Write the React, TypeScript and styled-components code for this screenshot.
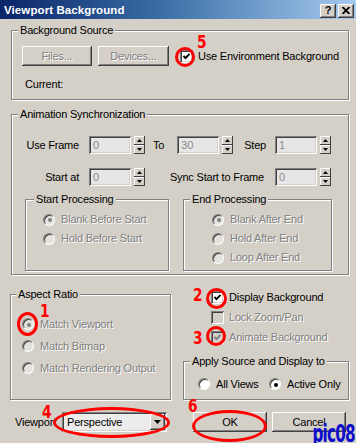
import React from "react";
import styled, { createGlobalStyle } from "styled-components";

const FONT = `"Liberation Sans", Arial, sans-serif`;
const FACE = "#D4D0C8";

const GlobalStyle = createGlobalStyle`
  html, body {
    margin: 0;
    padding: 0;
    background: ${FACE};
  }
  body {
    font-family: ${FONT};
    font-size: 11px;
    letter-spacing: -0.2px;
    color: #000;
  }
`;

const Window = styled.div`
  position: relative;
  width: 356px;
  height: 443px;
  overflow: hidden;
  background: ${FACE};
  display: flex;
  flex-direction: column;
`;

const TitleBar = styled.div`
  height: 19px;
  display: flex;
  align-items: center;
  justify-content: space-between;
  padding: 0 2px 0 4px;
  background: linear-gradient(to right, #0a246a 0%, #3a6ea5 45%, #a6caf0 100%);
`;

const TitleText = styled.span`
  color: #fff;
  font-weight: 700;
  font-size: 11.5px;
  letter-spacing: 0.1px;
`;

const TitleButtons = styled.div`
  display: flex;
  gap: 2px;
  margin-top: 2px;
`;

const TitleButton = styled.div`
  width: 16px;
  height: 14px;
  box-sizing: border-box;
  background: ${FACE};
  box-shadow: inset -1px -1px #404040, inset 1px 1px #fff, inset -2px -2px #808080;
  display: flex;
  align-items: center;
  justify-content: center;
  font-weight: 700;
  font-size: 11px;
  line-height: 1;
`;

const Body = styled.div`
  display: flex;
  flex-direction: column;
  padding: 5px 7px 0 11px;
`;

const Group = styled.fieldset<{ $mt?: number; $pl?: number; $pb?: number; $w?: number }>`
  margin: ${(p) => p.$mt ?? 0}px 0 0;
  padding: 0 0 ${(p) => p.$pb ?? 0}px ${(p) => p.$pl ?? 0}px;
  min-width: 0;
  ${(p) => (p.$w ? `width: ${p.$w}px;` : "")}
  box-sizing: border-box;
  border: 1px solid #808080;
  box-shadow: inset 1px 1px #fff, 1px 1px #fff;
`;

const Legend = styled.legend<{ $ml?: number }>`
  margin-left: ${(p) => p.$ml ?? 6}px;
  padding: 0 2px;
  background: ${FACE};
  line-height: 13px;
  white-space: nowrap;
`;

const Row = styled.div<{ $mt?: number; $pl?: number; $pr?: number }>`
  display: flex;
  align-items: center;
  margin-top: ${(p) => p.$mt ?? 0}px;
  padding-left: ${(p) => p.$pl ?? 0}px;
  padding-right: ${(p) => p.$pr ?? 0}px;
`;

const Text = styled.span<{ $disabled?: boolean; $ml?: number }>`
  line-height: 13px;
  white-space: nowrap;
  margin-left: ${(p) => p.$ml ?? 0}px;
  color: ${(p) => (p.$disabled ? "#808080" : "#000")};
  text-shadow: ${(p) => (p.$disabled ? "1px 1px #fff" : "none")};
`;

const FieldLabel = styled.span<{ $w?: number; $mr?: number; $ml?: string; $left?: boolean }>`
  ${(p) => (p.$w ? `width: ${p.$w}px;` : "")}
  text-align: ${(p) => (p.$left ? "left" : "right")};
  white-space: nowrap;
  line-height: 13px;
  margin-right: ${(p) => p.$mr ?? 0}px;
  margin-left: ${(p) => p.$ml ?? "0"};
`;

const PushButton = styled.div<{ $w: number; $ml?: number; $disabled?: boolean }>`
  width: ${(p) => p.$w}px;
  height: 20px;
  margin-left: ${(p) => p.$ml ?? 0}px;
  box-sizing: border-box;
  flex-shrink: 0;
  display: flex;
  align-items: center;
  justify-content: center;
  background: ${FACE};
  box-shadow: inset -1px -1px #404040, inset 1px 1px #fff, inset -2px -2px #808080;
  color: ${(p) => (p.$disabled ? "#808080" : "#000")};
  text-shadow: ${(p) => (p.$disabled ? "1px 1px #fff" : "none")};
  line-height: 13px;
`;

const Sunken = styled.div<{ $w: number; $h: number; $bg?: string; $ml?: number }>`
  width: ${(p) => p.$w}px;
  height: ${(p) => p.$h}px;
  margin-left: ${(p) => p.$ml ?? 0}px;
  box-sizing: border-box;
  background: ${(p) => p.$bg ?? "#e6e6e6"};
  box-shadow: inset 1px 1px #808080, inset -1px -1px #fff, inset 2px 2px #404040, inset -2px -2px ${FACE};
  flex-shrink: 0;
`;

const NumInput = styled(Sunken)`
  display: flex;
  align-items: center;
  padding-left: 4px;
  color: #8a8a8a;
  line-height: 13px;
`;

const SpinBox = styled.div`
  width: 11px;
  height: 18px;
  margin-left: 3px;
  display: flex;
  flex-direction: column;
  flex-shrink: 0;
`;

const SpinHalf = styled.div`
  flex: 1;
  display: flex;
  align-items: center;
  justify-content: center;
  background: ${FACE};
  box-shadow: inset -1px -1px #404040, inset 1px 1px #fff;
`;

const Field = styled.div`
  display: flex;
  align-items: center;
  flex-shrink: 0;
`;

const Tri = ({ down }: { down?: boolean }) => (
  <svg width="5" height="3" viewBox="0 0 5 3">
    <polygon points={down ? "0,0 5,0 2.5,3" : "0,3 5,3 2.5,0"} fill="#000" />
  </svg>
);

const Spinner = ({ value }: { value: string }) => (
  <Field>
    <NumInput $w={42} $h={18}>{value}</NumInput>
    <SpinBox>
      <SpinHalf>
        <Tri />
      </SpinHalf>
      <SpinHalf>
        <Tri down />
      </SpinHalf>
    </SpinBox>
  </Field>
);

const Mid = styled.div`
  flex: 1;
  display: flex;
  align-items: center;
`;

const SubRow = styled.div`
  display: flex;
  align-items: stretch;
  margin-top: 7px;
  padding-left: 13px;
  gap: 14px;
`;

const OptionList = styled.div<{ $mt: number; $pl: number }>`
  display: flex;
  flex-direction: column;
  margin-top: ${(p) => p.$mt}px;
  padding-left: ${(p) => p.$pl}px;
`;

const Option = styled.div<{ $h: number; $w?: number }>`
  height: ${(p) => p.$h}px;
  ${(p) => (p.$w ? `width: ${p.$w}px;` : "")}
  display: flex;
  align-items: center;
  flex-shrink: 0;
`;

const RadioDot = styled.div<{ $enabled?: boolean }>`
  width: 12px;
  height: 12px;
  box-sizing: border-box;
  border-radius: 50%;
  flex-shrink: 0;
  background: ${(p) => (p.$enabled ? "#fff" : "#e4e2dd")};
  border: 1px solid #808080;
  border-right-color: #fff;
  border-bottom-color: #fff;
  box-shadow: inset 1px 1px #404040;
  display: flex;
  align-items: center;
  justify-content: center;
`;

const Pip = styled.div<{ $enabled?: boolean }>`
  width: 4px;
  height: 4px;
  border-radius: 50%;
  margin: 1px 0 0 1px;
  background: ${(p) => (p.$enabled ? "#000" : "#808080")};
`;

const Radio = ({
  label,
  checked,
  enabled,
}: {
  label: string;
  checked?: boolean;
  enabled?: boolean;
}) => (
  <>
    <RadioDot $enabled={enabled}>{checked && <Pip $enabled={enabled} />}</RadioDot>
    <Text $ml={6} $disabled={!enabled}>
      {label}
    </Text>
  </>
);

const CheckBoxBox = styled(Sunken)`
  display: flex;
  align-items: center;
  justify-content: center;
`;

const Check = ({
  enabled,
  checked,
  ml,
}: {
  enabled?: boolean;
  checked?: boolean;
  ml?: number;
}) => (
  <CheckBoxBox $w={13} $h={13} $ml={ml} $bg={enabled ? "#fff" : FACE}>
    {checked && (
      <svg width="9" height="9" viewBox="0 0 9 9">
        <polyline
          points="1.5,4 3.5,6.2 7.5,1.8"
          fill="none"
          stroke={enabled ? "#000" : "#808080"}
          strokeWidth="1.9"
        />
      </svg>
    )}
  </CheckBoxBox>
);

const Lower = styled.div`
  display: flex;
  gap: 12px;
`;

const RightCol = styled.div`
  flex: 1;
  display: flex;
  flex-direction: column;
`;

const BottomRow = styled.div`
  display: flex;
  align-items: center;
  margin-top: 12px;
  padding-left: 4px;
`;

const Combo = styled(Sunken)`
  display: flex;
  align-items: center;
  justify-content: space-between;
  padding: 2px 2px 2px 5px;
  line-height: 13px;
`;

const ComboArrow = styled.div`
  width: 15px;
  height: 16px;
  box-sizing: border-box;
  display: flex;
  align-items: center;
  justify-content: center;
  background: ${FACE};
  box-shadow: inset -1px -1px #404040, inset 1px 1px #fff, inset -2px -2px #808080;
`;

const Overlay = styled.div`
  position: absolute;
  inset: 0;
  pointer-events: none;
`;

const Ring = styled.div<{ $x: number; $y: number; $w: number; $h: number }>`
  position: absolute;
  left: ${(p) => p.$x}px;
  top: ${(p) => p.$y}px;
  width: ${(p) => p.$w}px;
  height: ${(p) => p.$h}px;
  box-sizing: border-box;
  border: 3px solid #f00;
  border-radius: 50%;
`;

const Num = styled.span<{ $x: number; $y: number }>`
  position: absolute;
  left: ${(p) => p.$x}px;
  top: ${(p) => p.$y}px;
  font-family: "DejaVu Sans Condensed", "DejaVu Sans", sans-serif;
  font-weight: 700;
  font-size: 18px;
  letter-spacing: 0;
  line-height: 1;
  color: #f00;
  transform: scaleX(0.85);
  transform-origin: left top;
`;

const Stamp = styled.span`
  position: absolute;
  right: 1px;
  bottom: -3px;
  font-family: "DejaVu Sans Condensed", "DejaVu Sans", sans-serif;
  font-weight: 700;
  font-size: 20px;
  line-height: 1;
  letter-spacing: -1px;
  color: #0d0dcc;
  transform: scale(0.85, 1.2);
  transform-origin: right bottom;
`;

export default function App() {
  return (
    <Window>
      <GlobalStyle />
      <TitleBar>
        <TitleText>Viewport Background</TitleText>
        <TitleButtons>
          <TitleButton>?</TitleButton>
          <TitleButton>
            <svg width="8" height="7" viewBox="0 0 8 7">
              <path d="M0.5 0 L7.5 7 M7.5 0 L0.5 7" stroke="#000" strokeWidth="1.8" />
            </svg>
          </TitleButton>
        </TitleButtons>
      </TitleBar>

      <Body>
        <Group $pb={8}>
          <Legend>Background Source</Legend>
          <Row $mt={9} $pl={10}>
            <PushButton $w={70} $disabled>
              Files...
            </PushButton>
            <PushButton $w={71} $ml={6} $disabled>
              Devices...
            </PushButton>
            <Check enabled checked ml={11} />
            <Text $ml={5}>Use Environment Background</Text>
          </Row>
          <Row $mt={12} $pl={13}>
            <Text>Current:</Text>
          </Row>
        </Group>

        <Group $mt={8} $pb={3}>
          <Legend>Animation Synchronization</Legend>
          <Row $mt={15} $pr={17}>
            <FieldLabel $w={67} $mr={10}>
              Use Frame
            </FieldLabel>
            <Spinner value="0" />
            <Mid>
              <FieldLabel $ml="8px" $mr={13}>
                To
              </FieldLabel>
              <Spinner value="30" />
              <FieldLabel $ml="auto" $mr={9}>
                Step
              </FieldLabel>
            </Mid>
            <Spinner value="1" />
          </Row>
          <Row $mt={14} $pr={17}>
            <FieldLabel $w={67} $mr={10}>
              Start at
            </FieldLabel>
            <Spinner value="0" />
            <Mid>
              <FieldLabel $ml="auto" $mr={11}>
                Sync Start to Frame
              </FieldLabel>
            </Mid>
            <Spinner value="0" />
          </Row>
          <SubRow>
            <Group $w={144}>
              <Legend $ml={8}>Start Processing</Legend>
              <OptionList $mt={4} $pl={17}>
                <Option $h={19}>
                  <Radio label="Blank Before Start" checked />
                </Option>
                <Option $h={19}>
                  <Radio label="Hold Before Start" />
                </Option>
              </OptionList>
            </Group>
            <Group $w={149} $pb={3}>
              <Legend $ml={6}>End Processing</Legend>
              <OptionList $mt={4} $pl={28}>
                <Option $h={19}>
                  <Radio label="Blank After End" checked />
                </Option>
                <Option $h={19}>
                  <Radio label="Hold After End" />
                </Option>
                <Option $h={19}>
                  <Radio label="Loop After End" />
                </Option>
              </OptionList>
            </Group>
          </SubRow>
        </Group>

        <Lower>
          <Group $mt={13} $w={161} $pb={18} style={{ marginLeft: -1 }}>
            <Legend $ml={5}>Aspect Ratio</Legend>
            <OptionList $mt={12} $pl={11}>
              <Option $h={22}>
                <Radio label="Match Viewport" checked />
              </Option>
              <Option $h={22}>
                <Radio label="Match Bitmap" />
              </Option>
              <Option $h={22}>
                <Radio label="Match Rendering Output" />
              </Option>
            </OptionList>
          </Group>
          <RightCol>
            <OptionList $mt={12} $pl={28}>
              <Option $h={20}>
                <Check enabled checked />
                <Text $ml={5}>Display Background</Text>
              </Option>
              <Option $h={20}>
                <Check />
                <Text $ml={5} $disabled>
                  Lock Zoom/Pan
                </Text>
              </Option>
              <Option $h={20}>
                <Check checked />
                <Text $ml={5} $disabled>
                  Animate Background
                </Text>
              </Option>
            </OptionList>
            <Group $mt={8} $pb={8}>
              <Legend $ml={6}>Apply Source and Display to</Legend>
              <Row $mt={9} $pl={14}>
                <Option $h={14} $w={71}>
                  <Radio label="All Views" enabled />
                </Option>
                <Option $h={14}>
                  <Radio label="Active Only" enabled checked />
                </Option>
              </Row>
            </Group>
          </RightCol>
        </Lower>

        <BottomRow>
          <FieldLabel $w={47} $left>
            Viewport
          </FieldLabel>
          <Combo $w={105} $h={20} $bg="#ececec">
            <span>Perspective</span>
            <ComboArrow>
              <svg width="7" height="4" viewBox="0 0 7 4">
                <polygon points="0,0 7,0 3.5,4" fill="#000" />
              </svg>
            </ComboArrow>
          </Combo>
          <PushButton $w={74} $ml={26}>
            OK
          </PushButton>
          <PushButton $w={74} $ml={5}>
            Cancel
          </PushButton>
        </BottomRow>
      </Body>

      <Overlay>
        <Ring $x={175} $y={47} $w={20} $h={20} />
        <Num $x={197} $y={33}>5</Num>
        <Ring $x={17} $y={312} $w={21} $h={24} />
        <Num $x={40} $y={302}>1</Num>
        <Ring $x={206} $y={288} $w={21} $h={21} />
        <Num $x={193} $y={286}>2</Num>
        <Ring $x={206} $y={326} $w={20} $h={20} />
        <Num $x={193} $y={329}>3</Num>
        <Ring $x={53} $y={407} $w={117} $h={31} />
        <Num $x={42} $y={403}>4</Num>
        <Ring $x={192} $y={410} $w={75} $h={32} />
        <Num $x={188} $y={397}>6</Num>
        <Stamp>pic08</Stamp>
      </Overlay>
    </Window>
  );
}
